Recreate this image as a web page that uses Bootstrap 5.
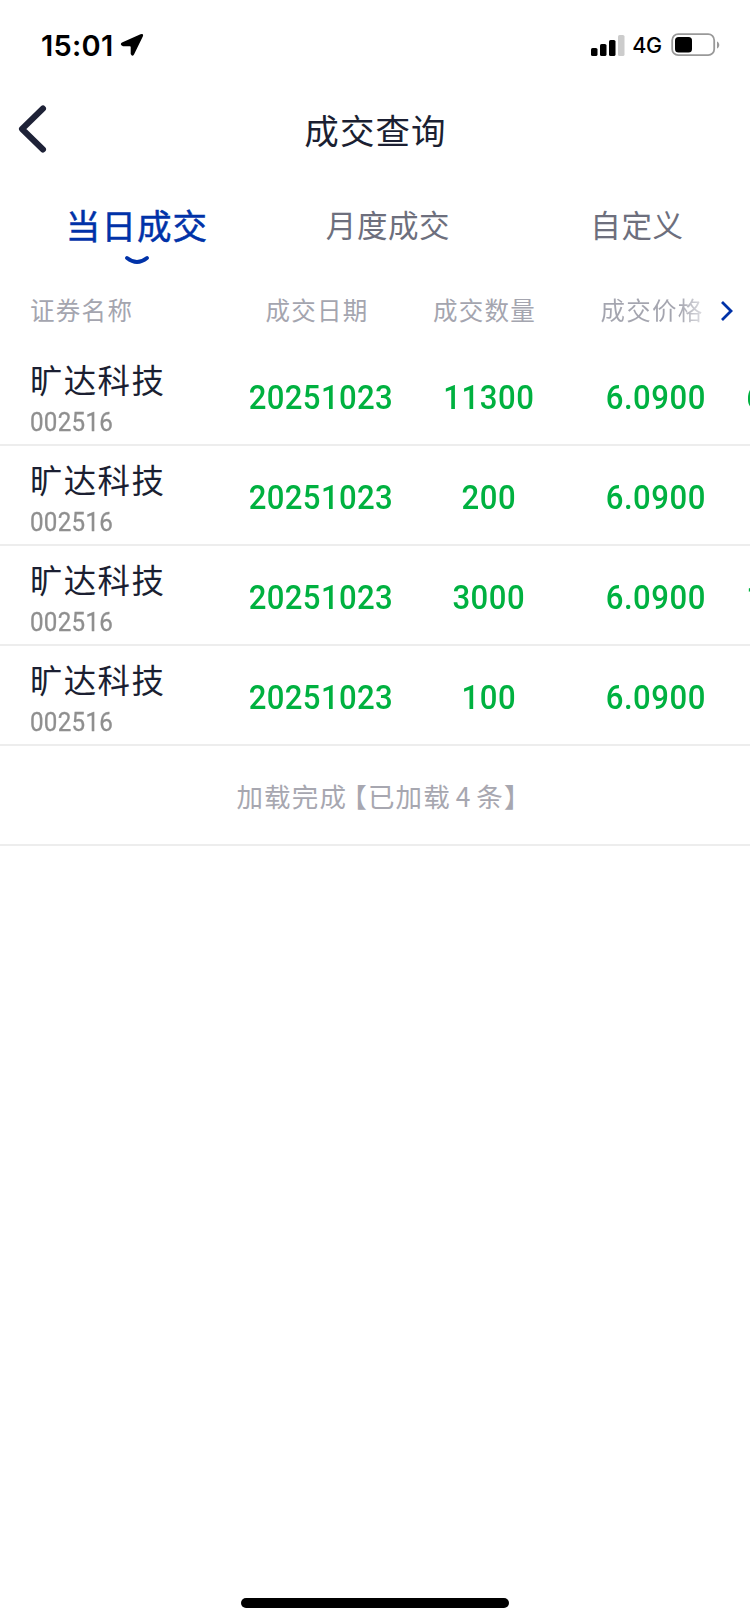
<!DOCTYPE html>
<html lang="zh-CN">
<head>
<meta charset="utf-8">
<meta name="viewport" content="width=device-width, initial-scale=1">
<title>成交查询</title>
<link href="https://cdn.jsdelivr.net/npm/bootstrap@5.3.0/dist/css/bootstrap.min.css" rel="stylesheet">
<style>
body{font-family:"Noto Sans CJK SC",sans-serif;color:#1b1f32;background:#fff;line-height:1}
.screen{width:750px;height:1624px}
.status{height:90px;padding:0 30px 0 41px;font-family:Inter,sans-serif;color:#000}
.clock{font-size:29px;font-weight:600;letter-spacing:.25px}
.net{font-size:21.5px;font-weight:500;letter-spacing:-.2px;padding-top:2px;margin:0 9px 0 7px}
.titlebar{height:84px;padding-bottom:5px;display:grid;grid-template-columns:100px 1fr 100px;align-items:center}
.titlebar svg{margin-bottom:2px}
.titlebar h1{font-size:34.5px;font-weight:400;letter-spacing:1.1px;line-height:1;padding-left:1px}
.tabs{height:100px;display:grid;grid-template-columns:274px 228px 270px}
.tabs button{border:0;background:none;padding:0;height:100px;color:#6d6f7d;font-size:30.5px;letter-spacing:.6px;line-height:1}
.tabs .active{color:#0032a8;font-size:34.5px;-webkit-text-stroke:.5px #0032a8;letter-spacing:1.1px}
.smile{top:81px}
.cols{display:grid;grid-template-columns:237px 167px 170px 163px 156px;width:893px;align-items:center}
.heads{grid-template-columns:233px 168px 167px 168px 154px;height:72px;color:#a4a5af;font-size:24.5px;letter-spacing:1.3px}
.heads>:first-child{padding-left:30px}
.fade-end{background:linear-gradient(90deg,#a4a5af 76%,#e1e1e5 100%);-webkit-background-clip:text;background-clip:text;color:transparent}
.deal{height:100px;border-bottom:2px solid #ededed}
.deal>:first-child{padding:8px 0 0 30px}
.stock{font-size:32.5px;letter-spacing:1.3px}
.code{font-family:Roboto,sans-serif;font-size:26px;color:#8f8f8f;letter-spacing:.3px;-webkit-text-stroke:.3px #8f8f8f;transform:scaleX(.93);transform-origin:left;margin-top:13px}
.num{font-family:Roboto,sans-serif;font-size:34px;font-weight:500;color:#00b140;letter-spacing:.6px;padding-top:4px}
.num span{display:inline-block;transform:scaleX(.915)}
.day{letter-spacing:.4px}
.done{height:100px;border-bottom:2px solid #ededed;color:#a7a7b0;font-size:26.5px;letter-spacing:1.2px;word-spacing:-2.5px;padding:2px 0 0 18px}
.bracket{margin-left:-7px}
.home{width:268px;height:10px;margin-bottom:16px}
</style>
</head>
<body>
<div class="screen d-flex flex-column overflow-hidden">
  <header class="status d-flex align-items-center justify-content-between">
    <div class="d-flex align-items-center">
      <span class="clock">15:01</span>
      <svg style="margin-left:7px" width="24" height="24" viewBox="0 0 24 24"><path d="M2 9.5 20.5 1.2Q24 .2 22.8 3.5L14 21.5Q12.2 24.3 10.7 21V14Q10.7 13.2 9.9 13.2H3Q-.8 11.5 2 9.5Z"/></svg>
    </div>
    <div class="d-flex align-items-center">
      <svg width="34" height="22" viewBox="0 0 34 22"><rect y="14" width="6.5" height="8" rx="1.6"/><rect x="9" y="10" width="6.5" height="12" rx="1.6"/><rect x="18" y="6" width="6.5" height="16" rx="1.6"/><rect x="27" y="1" width="6.5" height="21" rx="1.6" fill="#ccc"/></svg>
      <span class="net">4G</span>
      <svg width="49" height="24" viewBox="0 0 49 24"><rect x="1.2" y="1.2" width="42" height="21" rx="6" fill="none" stroke="#999" stroke-width="1.8"/><rect x="4" y="4" width="17" height="15.5" rx="3.5"/><path d="M46 8.5c3 1.2 3 5.8 0 7Z" fill="#999"/></svg>
    </div>
  </header>
  <nav class="titlebar">
    <svg width="50" height="50" viewBox="0 0 50 50" fill="none" stroke="#1e2237" stroke-width="6" stroke-linecap="round" stroke-linejoin="round"><path d="M43 4.5 22 25 43 45.5"/></svg>
    <h1 class="text-center m-0">成交查询</h1>
  </nav>
  <div class="tabs" role="tablist">
    <button class="active position-relative" role="tab">当日成交
      <svg class="smile position-absolute start-50 translate-middle-x" width="26" height="12" viewBox="0 0 26 12" fill="none" stroke="#0032a8" stroke-width="3.8" stroke-linecap="round"><path d="M3 3Q13 11 23 3"/></svg>
    </button>
    <button role="tab">月度成交</button>
    <button role="tab">自定义</button>
  </div>
  <div class="position-relative">
    <div class="cols heads text-center">
      <div class="text-start">证券名称</div>
      <div>成交日期</div><div>成交数量</div><div><span class="fade-end">成交价格</span></div>
    </div>
    <svg class="position-absolute top-50 end-0 translate-middle-y me-3" width="14" height="22" viewBox="0 0 14 22" fill="none" stroke="#0032a8" stroke-width="2.8"><path d="m2 3 9 9-9 9"/></svg>
  </div>
  <main>
    <div class="deal cols text-center"><div class="text-start"><div class="stock">旷达科技</div><div class="code">002516</div></div><div class="num day"><span>20251023</span></div><div class="num"><span>11300</span></div><div class="num"><span>6.0900</span></div><div class="num"><span>68817.00</span></div></div>
    <div class="deal cols text-center"><div class="text-start"><div class="stock">旷达科技</div><div class="code">002516</div></div><div class="num day"><span>20251023</span></div><div class="num"><span>200</span></div><div class="num"><span>6.0900</span></div><div class="num"></div></div>
    <div class="deal cols text-center"><div class="text-start"><div class="stock">旷达科技</div><div class="code">002516</div></div><div class="num day"><span>20251023</span></div><div class="num"><span>3000</span></div><div class="num"><span>6.0900</span></div><div class="num"><span>18270.00</span></div></div>
    <div class="deal cols text-center"><div class="text-start"><div class="stock">旷达科技</div><div class="code">002516</div></div><div class="num day"><span>20251023</span></div><div class="num"><span>100</span></div><div class="num"><span>6.0900</span></div><div class="num"></div></div>
    <div class="done d-flex align-items-center justify-content-center"><span>加载完成<span class="bracket">【</span>已加载 4 条】</span></div>
  </main>
  <div class="home bg-black rounded-pill mx-auto mt-auto"></div>
</div>
<script src="https://cdn.jsdelivr.net/npm/bootstrap@5.3.0/dist/js/bootstrap.bundle.min.js"></script>
</body>
</html>
